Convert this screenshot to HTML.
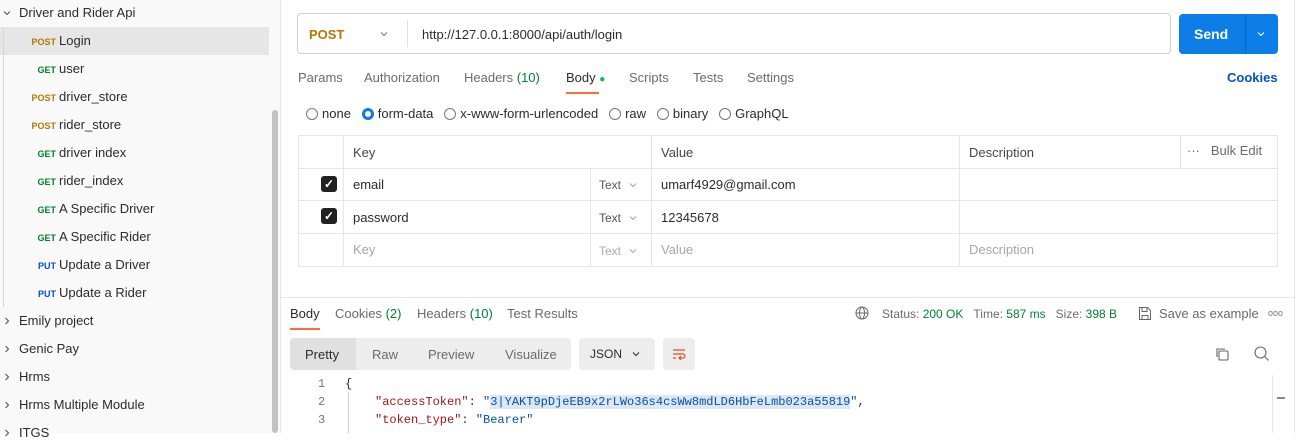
<!DOCTYPE html>
<html><head><style>
*{margin:0;padding:0;box-sizing:border-box}
body{width:1303px;height:433px;overflow:hidden;background:#fff;font-family:"Liberation Sans",sans-serif;font-size:13px;color:#2b2b2b;position:relative}
.a{position:absolute;white-space:nowrap}
#side{position:absolute;left:0;top:0;width:281px;height:433px;background:#f9f9f9;border-right:1px solid #e6e6e6}
.m{font-size:9px;font-weight:bold;display:inline-block;width:26px;text-align:right;margin-right:3px}
.post{color:#ad7a03}.get{color:#007f31}.put{color:#0053b8}
.it{position:absolute;left:30px;height:28px;line-height:28px}
.fo{position:absolute;left:19px;height:28px;line-height:28px}
.tab{color:#6b6b6b}
.rad{display:inline-block;width:12px;height:12px;border:1px solid #777;border-radius:50%;vertical-align:-2px;margin-right:4px}
.chk{position:absolute;width:16px;height:16px;background:#212121;border-radius:3px;color:#fff;font-size:12px;line-height:16px;text-align:center;font-weight:bold}
.mono{font-family:"Liberation Mono",monospace;font-size:12px}
</style></head><body>
<svg width="0" height="0" style="position:absolute"><defs>
<symbol id="dn" viewBox="0 0 10 10"><path d="M2 3.5l3 3 3-3" fill="none" stroke="currentColor" stroke-width="1.1"/></symbol>
<symbol id="rt" viewBox="0 0 10 10"><path d="M3.5 2l3 3-3 3" fill="none" stroke="currentColor" stroke-width="1.1"/></symbol>
</defs></svg>
<div id="side">
<div style="position:absolute;left:0;top:27px;width:269px;height:28px;background:#e6e6e6"></div>
<div style="position:absolute;left:3px;top:27px;width:1px;height:280px;background:#d6d6d6"></div>
<div style="position:absolute;left:272px;top:110px;width:6px;height:323px;background:#c2c2c2;border-radius:3px"></div>
<svg class="a" style="left:2px;top:8px;color:#555" width="10" height="10"><use href="#dn"/></svg>
<div class="fo" style="top:-1px">Driver and Rider Api</div>
<div class="it" style="top:27px"><span class="m post">POST</span>Login</div>
<div class="it" style="top:55px"><span class="m get">GET</span>user</div>
<div class="it" style="top:83px"><span class="m post">POST</span>driver_store</div>
<div class="it" style="top:111px"><span class="m post">POST</span>rider_store</div>
<div class="it" style="top:139px"><span class="m get">GET</span>driver index</div>
<div class="it" style="top:167px"><span class="m get">GET</span>rider_index</div>
<div class="it" style="top:195px"><span class="m get">GET</span>A Specific Driver</div>
<div class="it" style="top:223px"><span class="m get">GET</span>A Specific Rider</div>
<div class="it" style="top:251px"><span class="m put">PUT</span>Update a Driver</div>
<div class="it" style="top:279px"><span class="m put">PUT</span>Update a Rider</div>
<svg class="a" style="left:2px;top:316px;color:#555" width="10" height="10"><use href="#rt"/></svg>
<div class="fo" style="top:307px">Emily project</div>
<svg class="a" style="left:2px;top:344px;color:#555" width="10" height="10"><use href="#rt"/></svg>
<div class="fo" style="top:335px">Genic Pay</div>
<svg class="a" style="left:2px;top:372px;color:#555" width="10" height="10"><use href="#rt"/></svg>
<div class="fo" style="top:363px">Hrms</div>
<svg class="a" style="left:2px;top:400px;color:#555" width="10" height="10"><use href="#rt"/></svg>
<div class="fo" style="top:391px">Hrms Multiple Module</div>
<svg class="a" style="left:2px;top:428px;color:#555" width="10" height="10"><use href="#rt"/></svg>
<div class="fo" style="top:419px">ITGS</div>
</div>
<div style="position:absolute;left:1294px;top:0;width:1px;height:433px;background:#e6e6e6"></div>

<div style="position:absolute;left:297px;top:13px;width:874px;height:41px;border:1px solid #d0d0d0;border-radius:4px"></div>
<div style="position:absolute;left:407px;top:20px;width:1px;height:27px;background:#e0e0e0"></div>
<div class="a" style="left:309px;top:27px;color:#ad7a03;font-weight:bold">POST</div>
<svg class="a" style="left:379px;top:29px;color:#777" width="10" height="10"><use href="#dn"/></svg>
<div class="a" style="left:422px;top:27px">http://127.0.0.1:8000/api/auth/login</div>
<div style="position:absolute;left:1179px;top:14px;width:99px;height:40px;background:#0c7ce6;border-radius:4px"></div>
<div style="position:absolute;left:1245px;top:14px;width:1px;height:40px;background:#0a65bd"></div>
<div class="a" style="left:1194px;top:26px;color:#fff;font-weight:bold;font-size:14px">Send</div>
<svg class="a" style="left:1256px;top:29px;color:#fff" width="10" height="10"><use href="#dn"/></svg>

<div class="a tab" style="left:298px;top:70px">Params</div>
<div class="a tab" style="left:364px;top:70px">Authorization</div>
<div class="a tab" style="left:464px;top:70px">Headers <span style="color:#007f31">(10)</span></div>
<div class="a" style="left:566px;top:70px">Body <span style="color:#0cbb52;font-size:10px">●</span></div>
<div style="position:absolute;left:566px;top:92px;width:33px;height:2px;background:#ff6c37"></div>
<div class="a tab" style="left:629px;top:70px">Scripts</div>
<div class="a tab" style="left:693px;top:70px">Tests</div>
<div class="a tab" style="left:747px;top:70px">Settings</div>
<div class="a" style="left:1227px;top:70px;color:#0053b8;font-weight:bold">Cookies</div>

<div class="a" style="left:306px;top:106px"><span class="rad"></span>none &nbsp;&nbsp;<span class="rad" style="border:3px solid #0c7ce6"></span>form-data &nbsp;&nbsp;<span class="rad"></span>x-www-form-urlencoded &nbsp;&nbsp;<span class="rad"></span>raw &nbsp;&nbsp;<span class="rad"></span>binary &nbsp;&nbsp;<span class="rad"></span>GraphQL</div>

<div style="position:absolute;left:298px;top:135px;width:980px;height:132px;border:1px solid #e6e6e6"></div>
<div style="position:absolute;left:298px;top:168px;width:980px;height:1px;background:#e6e6e6"></div>
<div style="position:absolute;left:298px;top:200px;width:980px;height:1px;background:#e6e6e6"></div>
<div style="position:absolute;left:298px;top:233px;width:980px;height:1px;background:#e6e6e6"></div>
<div style="position:absolute;left:343px;top:135px;width:1px;height:132px;background:#e6e6e6"></div>
<div style="position:absolute;left:590px;top:168px;width:1px;height:99px;background:#e6e6e6"></div>
<div style="position:absolute;left:651px;top:135px;width:1px;height:132px;background:#e6e6e6"></div>
<div style="position:absolute;left:959px;top:135px;width:1px;height:132px;background:#e6e6e6"></div>
<div style="position:absolute;left:1180px;top:135px;width:1px;height:33px;background:#e6e6e6"></div>
<div class="a" style="left:353px;top:145px;color:#444">Key</div>
<div class="a" style="left:661px;top:145px;color:#444">Value</div>
<div class="a" style="left:969px;top:145px;color:#444">Description</div>
<div class="a" style="left:1187px;top:143px;color:#6b6b6b">···&nbsp;&nbsp; Bulk Edit</div>
<div class="chk" style="left:321px;top:176px">✓</div>
<div class="chk" style="left:321px;top:208px">✓</div>
<div class="a" style="left:353px;top:177px">email</div>
<div class="a" style="left:353px;top:210px">password</div>
<div class="a" style="left:353px;top:242px;color:#a6a6a6">Key</div>
<div class="a" style="left:599px;top:178px;color:#555;font-size:12px">Text</div>
<div class="a" style="left:599px;top:211px;color:#555;font-size:12px">Text</div>
<div class="a" style="left:599px;top:244px;color:#aaa;font-size:12px">Text</div>
<svg class="a" style="left:628px;top:180px;color:#aaa" width="10" height="10"><use href="#dn"/></svg>
<svg class="a" style="left:628px;top:213px;color:#aaa" width="10" height="10"><use href="#dn"/></svg>
<svg class="a" style="left:628px;top:246px;color:#aaa" width="10" height="10"><use href="#dn"/></svg>
<div class="a" style="left:661px;top:177px">umarf4929@gmail.com</div>
<div class="a" style="left:661px;top:210px">12345678</div>
<div class="a" style="left:661px;top:242px;color:#a6a6a6">Value</div>
<div class="a" style="left:969px;top:242px;color:#a6a6a6">Description</div>

<div style="position:absolute;left:281px;top:297px;width:1013px;height:1px;background:#e6e6e6"></div>
<div class="a" style="left:290px;top:306px">Body</div>
<div style="position:absolute;left:290px;top:328px;width:30px;height:2px;background:#ff6c37"></div>
<div class="a tab" style="left:335px;top:306px">Cookies <span style="color:#007f31">(2)</span></div>
<div class="a tab" style="left:417px;top:306px">Headers <span style="color:#007f31">(10)</span></div>
<div class="a tab" style="left:507px;top:306px">Test Results</div>
<svg class="a" style="left:855px;top:306px" width="14" height="14" viewBox="0 0 14 14" fill="none" stroke="#666" stroke-width="1"><circle cx="7" cy="7" r="6"/><ellipse cx="7" cy="7" rx="2.5" ry="6"/><path d="M1 7h12"/></svg>
<div class="a" style="left:882px;top:307px;font-size:12px;color:#6b6b6b">Status: <span style="color:#007f31">200 OK</span> &nbsp;&nbsp;Time: <span style="color:#007f31">587 ms</span> &nbsp;&nbsp;Size: <span style="color:#007f31">398 B</span></div>
<svg class="a" style="left:1138px;top:306px" width="14" height="15" viewBox="0 0 14 15" fill="none" stroke="#666" stroke-width="1"><path d="M1.5 1.5h8l3 3v9h-11z"/><path d="M4 1.5v4h5v-4M4 13.5v-4h6v4"/></svg>
<div class="a tab" style="left:1159px;top:306px">Save as example</div>
<div class="a" style="left:1268px;top:308px;color:#777;font-size:9px">ooo</div>

<div style="position:absolute;left:290px;top:338px;width:281px;height:32px;background:#ededed;border-radius:4px"></div>
<div style="position:absolute;left:290px;top:338px;width:66px;height:32px;background:#e0e0e0;border-radius:4px 0 0 4px"></div>
<div class="a" style="left:305px;top:347px">Pretty</div>
<div class="a tab" style="left:372px;top:347px">Raw</div>
<div class="a tab" style="left:428px;top:347px">Preview</div>
<div class="a tab" style="left:505px;top:347px">Visualize</div>
<div style="position:absolute;left:579px;top:338px;width:76px;height:32px;background:#ededed;border-radius:4px"></div>
<div class="a" style="left:590px;top:347px;font-size:12px">JSON</div>
<svg class="a" style="left:631px;top:349px;color:#333" width="10" height="10"><use href="#dn"/></svg>
<div style="position:absolute;left:663px;top:338px;width:32px;height:32px;background:#ededed;border-radius:4px"></div>
<svg class="a" style="left:671px;top:346px" width="16" height="16" viewBox="0 0 16 16" fill="none" stroke="#e0522a" stroke-width="1.2"><path d="M2 4h12M2 8h10a2 2 0 0 1 0 4H8M10 10l-2 2 2 2M2 12h3"/></svg>
<svg class="a" style="left:1214px;top:346px" width="16" height="16" viewBox="0 0 16 16" fill="none" stroke="#666" stroke-width="1.1"><rect x="5" y="5" width="9" height="9" rx="1"/><path d="M3 11V3h8"/></svg>
<svg class="a" style="left:1253px;top:345px" width="17" height="17" viewBox="0 0 17 17" fill="none" stroke="#666" stroke-width="1.1"><circle cx="7.5" cy="7.5" r="5.5"/><path d="M11.5 11.5l4 4"/></svg>

<div style="position:absolute;left:1272px;top:375px;width:22px;height:58px;border-left:1px solid #e6e6e6"></div>
<div style="position:absolute;left:1277px;top:397px;width:8px;height:2px;background:#888"></div>
<div class="a mono" style="left:318px;top:377px;color:#777">1</div>
<div class="a mono" style="left:318px;top:395px;color:#777">2</div>
<div class="a mono" style="left:318px;top:413px;color:#777">3</div>
<div style="position:absolute;left:348px;top:392px;width:1px;height:41px;background:#ccc"></div>
<div class="a mono" style="left:345px;top:377px">{</div>
<div class="a mono" style="left:375px;top:395px"><span style="color:#a31515">"accessToken"</span>: <span style="color:#0451a5">"<span style="background:#dde7f3">3|YAKT9pDjeEB9x2rLWo36s4csWw8mdLD6HbFeLmb023a55819</span>"</span>,</div>
<div class="a mono" style="left:375px;top:413px"><span style="color:#a31515">"token_type"</span>: <span style="color:#0451a5">"Bearer"</span></div>
</body></html>
